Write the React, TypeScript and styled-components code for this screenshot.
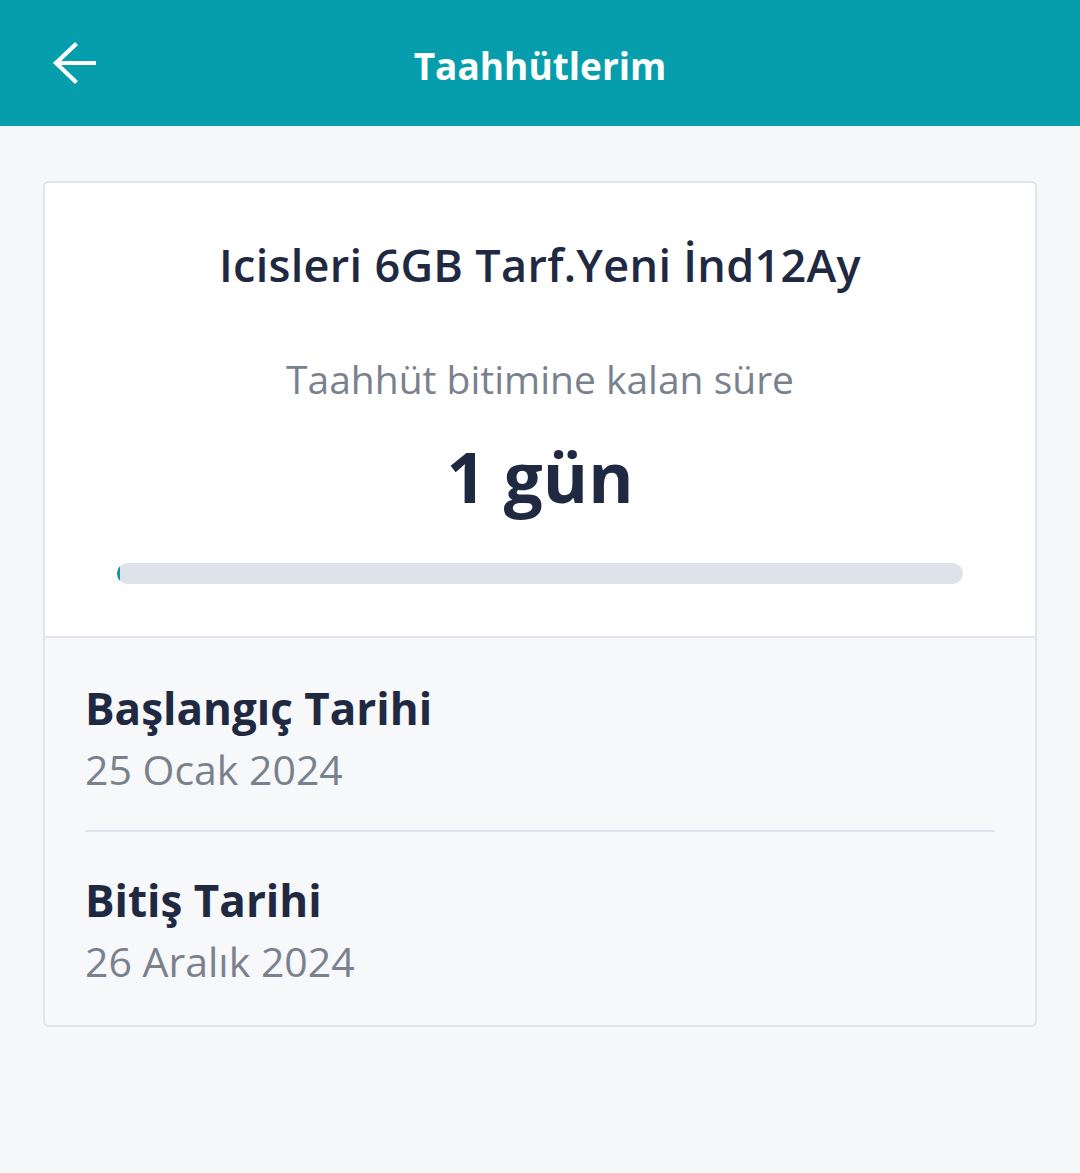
import React from "react";
import styled, { createGlobalStyle } from "styled-components";

const Global = createGlobalStyle`
  html, body { margin: 0; padding: 0; background: #F6F7F9; }
  body { font-family: "Open Sans", "Noto Sans", sans-serif; }
`;

const Page = styled.div`
  width: 1080px;
  min-height: 1173px;
  background: #F6F7F9;
`;

const Header = styled.header`
  height: 126px;
  background: #069EAD;
  display: flex;
  align-items: center;
  justify-content: center;
  position: relative;
`;

const BackButton = styled.button`
  position: absolute;
  left: 50px;
  top: 40px;
  width: 48px;
  height: 46px;
  padding: 0;
  border: none;
  background: transparent;
  display: flex;
  align-items: center;
  justify-content: center;
`;

const HeaderTitle = styled.h1`
  margin: 0;
  color: #fff;
  font-size: 37px;
  font-weight: 700;
  line-height: 48px;
  padding-top: 6px;
`;

const Content = styled.main`
  padding: 55px 43px;
`;

const Card = styled.section`
  border: 2px solid #E1E4EB;
  border-radius: 6px;
  overflow: hidden;
  background: #F6F8FA;
`;

const Summary = styled.div`
  background: #fff;
  border-bottom: 2px solid #E1E4EB;
  display: flex;
  flex-direction: column;
  align-items: center;
  padding: 54px 72px 52px;
`;

const PlanName = styled.h2`
  margin: 0;
  font-size: 45px;
  font-weight: 600;
  letter-spacing: 0.3px;
  color: #1F2942;
  line-height: 56px;
`;

const Caption = styled.div`
  margin-top: 61px;
  font-size: 39px;
  color: #7A818E;
  line-height: 50px;
`;

const Remaining = styled.div`
  margin-top: 29px;
  font-size: 69px;
  font-weight: 700;
  color: #1F2942;
  line-height: 86px;
`;

const Track = styled.div`
  margin-top: 44px;
  align-self: stretch;
  height: 21px;
  border-radius: 11px;
  background: #DEE2EB;
  overflow: hidden;
`;

const Fill = styled.div`
  height: 100%;
  background: #12939F;
`;

const Details = styled.div`
  padding: 2px 40px 3px 40px;
  display: flex;
  flex-direction: column;
`;

const Row = styled.div<{ $divider?: boolean }>`
  padding: 40px 0 36px;
  border-bottom: ${(p) => (p.$divider ? "2px solid #E1E4EB" : "none")};
`;

const Label = styled.div`
  font-size: 44px;
  font-weight: 700;
  color: #1F2942;
  line-height: 56px;
`;

const Value = styled.div`
  margin-top: 8px;
  font-size: 41px;
  color: #7A818E;
  line-height: 50px;
`;

export default function App() {
  const progress = 0.35;
  return (
    <Page>
      <Global />
      <Header>
        <BackButton aria-label="Geri">
          <svg width="44" height="42" viewBox="0 0 44 42" fill="none">
            <path d="M43 21H5M23 3L4 21l19 18" stroke="#fff" strokeWidth="4.2" strokeLinecap="square" strokeLinejoin="miter" />
          </svg>
        </BackButton>
        <HeaderTitle>Taahhütlerim</HeaderTitle>
      </Header>
      <Content>
        <Card>
          <Summary>
            <PlanName>Icisleri 6GB Tarf.Yeni İnd12Ay</PlanName>
            <Caption>Taahhüt bitimine kalan süre</Caption>
            <Remaining>1 gün</Remaining>
            <Track>
              <Fill style={{ width: `${progress}%` }} />
            </Track>
          </Summary>
          <Details>
            <Row $divider>
              <Label>Başlangıç Tarihi</Label>
              <Value>25 Ocak 2024</Value>
            </Row>
            <Row>
              <Label>Bitiş Tarihi</Label>
              <Value>26 Aralık 2024</Value>
            </Row>
          </Details>
        </Card>
      </Content>
    </Page>
  );
}
